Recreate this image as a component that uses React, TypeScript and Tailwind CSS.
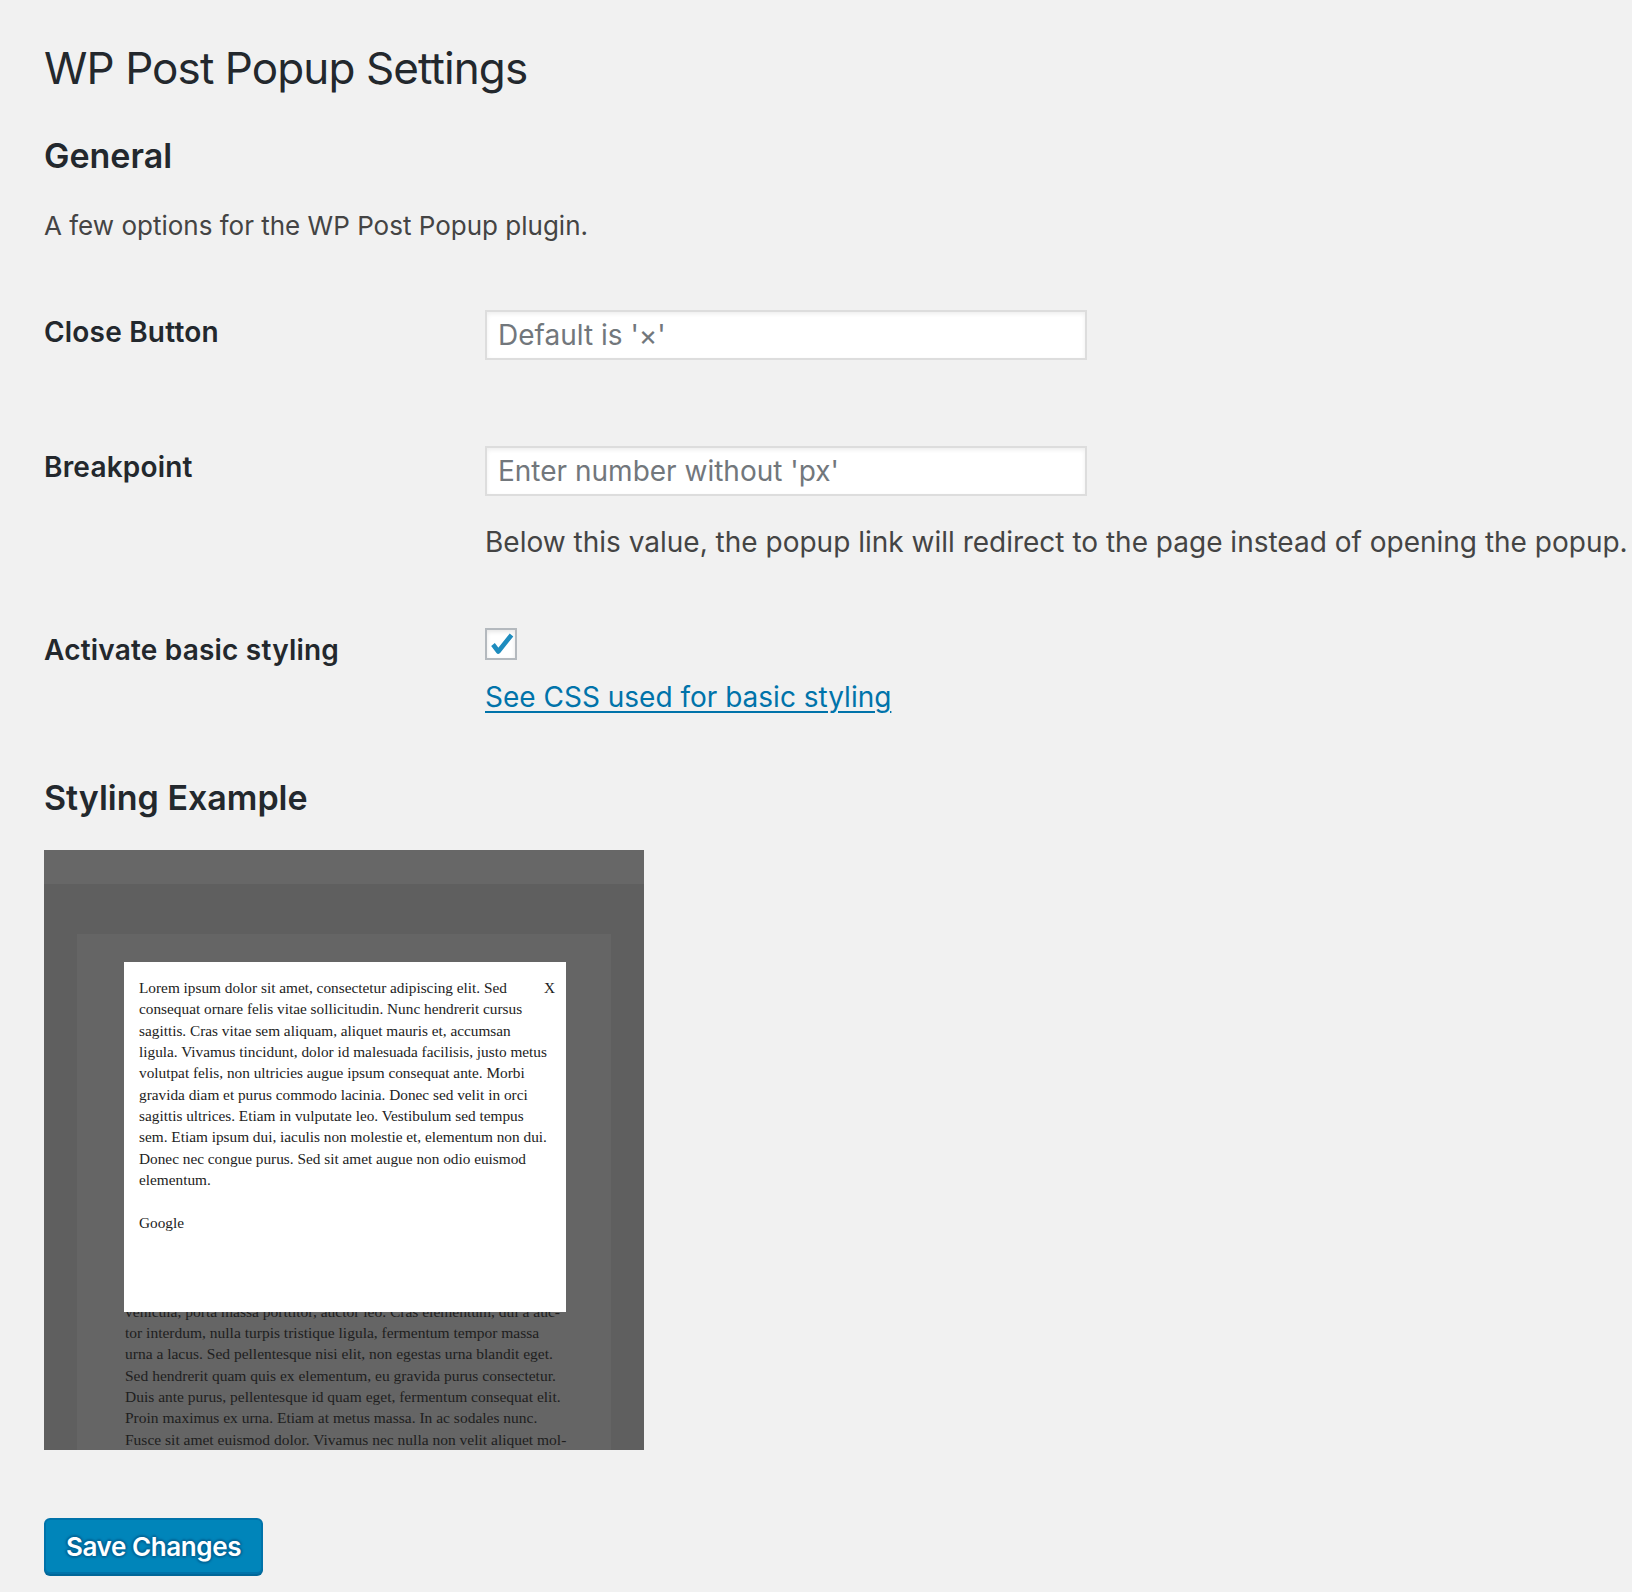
const popupLines = [
  "Lorem ipsum dolor sit amet, consectetur adipiscing elit. Sed",
  "consequat ornare felis vitae sollicitudin. Nunc hendrerit cursus",
  "sagittis. Cras vitae sem aliquam, aliquet mauris et, accumsan",
  "ligula. Vivamus tincidunt, dolor id malesuada facilisis, justo metus",
  "volutpat felis, non ultricies augue ipsum consequat ante. Morbi",
  "gravida diam et purus commodo lacinia. Donec sed velit in orci",
  "sagittis ultrices. Etiam in vulputate leo. Vestibulum sed tempus",
  "sem. Etiam ipsum dui, iaculis non molestie et, elementum non dui.",
  "Donec nec congue purus. Sed sit amet augue non odio euismod",
  "elementum.",
];

const pageLines = [
  "vehicula, porta massa porttitor, auctor leo. Cras elementum, dui a auc-",
  "tor interdum, nulla turpis tristique ligula, fermentum tempor massa",
  "urna a lacus. Sed pellentesque nisi elit, non egestas urna blandit eget.",
  "Sed hendrerit quam quis ex elementum, eu gravida purus consectetur.",
  "Duis ante purus, pellentesque id quam eget, fermentum consequat elit.",
  "Proin maximus ex urna. Etiam at metus massa. In ac sodales nunc.",
  "Fusce sit amet euismod dolor. Vivamus nec nulla non velit aliquet mol-",
];

const inputClass =
  "w-[602px] h-[50px] bg-white border-2 border-[#dddddd] shadow-[inset_0_2px_4px_rgba(0,0,0,0.07)] pl-[11px] text-[28px] text-[#32373c] placeholder:text-[#72777c] outline-none";

const labelClass = "w-[441px] shrink-0 text-[28px] leading-[36px] font-semibold tracking-[0.2px]";

const StylingExample = () => {
  return (
    <div className="relative w-[600px] h-[600px] bg-[#5f5f5f] flex flex-col">
      <div className="h-[34px] bg-[#676767]" />
      <div className="flex-1 flex flex-col px-[33px] pt-[50px] min-h-0">
        <div className="flex-1 min-h-0 overflow-hidden bg-[#656565] flex flex-col justify-end pl-[48px] font-['Liberation_Serif',serif] text-[15.5px] leading-[21.33px] text-[#1e1e1e]">
          {pageLines.map((line) => (
            <div key={line} className="whitespace-nowrap">
              {line}
            </div>
          ))}
        </div>
      </div>

      {/* popup on top of the page */}
      <div className="absolute left-[80px] top-[112px] w-[442px] h-[350px] bg-white pl-[15px] pt-[15px] font-['Liberation_Serif',serif] text-[15.3px] leading-[21.33px] text-[#222]">
        {popupLines.map((line) => (
          <div key={line} className="whitespace-nowrap">
            {line}
          </div>
        ))}
        <div className="h-[21.33px]" />
        <div>Google</div>
        <span className="absolute right-[11px] top-[15px]">X</span>
      </div>
    </div>
  );
};

const App = () => {
  return (
    <div className="min-h-screen bg-[#f1f1f1] font-['Inter',sans-serif] text-[#23282d]">
      <div className="pl-[44px] pt-[40px] pb-[20px]">
        <h1 className="text-[44px] leading-[56px] font-normal tracking-[-0.9px]">WP Post Popup Settings</h1>
        <h2 className="mt-[40px] text-[34px] leading-[40px] font-semibold">General</h2>
        <p className="mt-[32px] text-[26px] leading-[36px] text-[#444]">
          A few options for the WP Post Popup plugin.
        </p>

        {/* Close Button */}
        <div className="mt-[66px] flex">
          <label className={labelClass + " pt-[4px]"}>Close Button</label>
          <input className={inputClass} placeholder="Default is '×'" />
        </div>

        {/* Breakpoint */}
        <div className="mt-[86px] flex">
          <label className={labelClass + " pt-[3px]"}>Breakpoint</label>
          <div className="flex flex-col">
            <input className={inputClass} placeholder="Enter number without 'px'" />
            <p className="mt-[28px] text-[28px] leading-[36px] text-[#444] whitespace-nowrap">
              Below this value, the popup link will redirect to the page instead of opening the popup.
            </p>
          </div>
        </div>

        {/* Activate basic styling */}
        <div className="mt-[68px] flex">
          <label className={labelClass + " pt-[4px]"}>Activate basic styling</label>
          <div className="flex flex-col items-start">
            <div className="w-[32px] h-[32px] bg-white border-2 border-[#b4b9be] shadow-[inset_0_2px_4px_rgba(0,0,0,0.1)] flex items-center justify-center">
              <svg width="28" height="28" viewBox="0 0 28 28">
                <path
                  d="M6 14.5 L11.3 21.5 L24.5 5"
                  fill="none"
                  stroke="#1e8cbe"
                  strokeWidth="4.6"
                  strokeLinejoin="round"
                />
              </svg>
            </div>
            <a
              href="#"
              className="mt-[19px] text-[28px] leading-[36px] text-[#0073aa] underline decoration-2 underline-offset-[4px]"
            >
              See CSS used for basic styling
            </a>
          </div>
        </div>

        <h2 className="mt-[63px] text-[34px] leading-[40px] font-semibold">Styling Example</h2>
        <div className="mt-[32px]">
          <StylingExample />
        </div>

        <button className="mt-[68px] w-[219px] h-[56px] rounded-[6px] bg-[#0085ba] border-2 border-[#0073aa] shadow-[0_2px_0_#006799] text-white text-[26px] font-semibold tracking-[-0.4px] [text-shadow:0_-2px_2px_#006799,2px_0_2px_#006799,0_2px_2px_#006799,-2px_0_2px_#006799]">
          Save Changes
        </button>
      </div>
    </div>
  );
};

export default App;
